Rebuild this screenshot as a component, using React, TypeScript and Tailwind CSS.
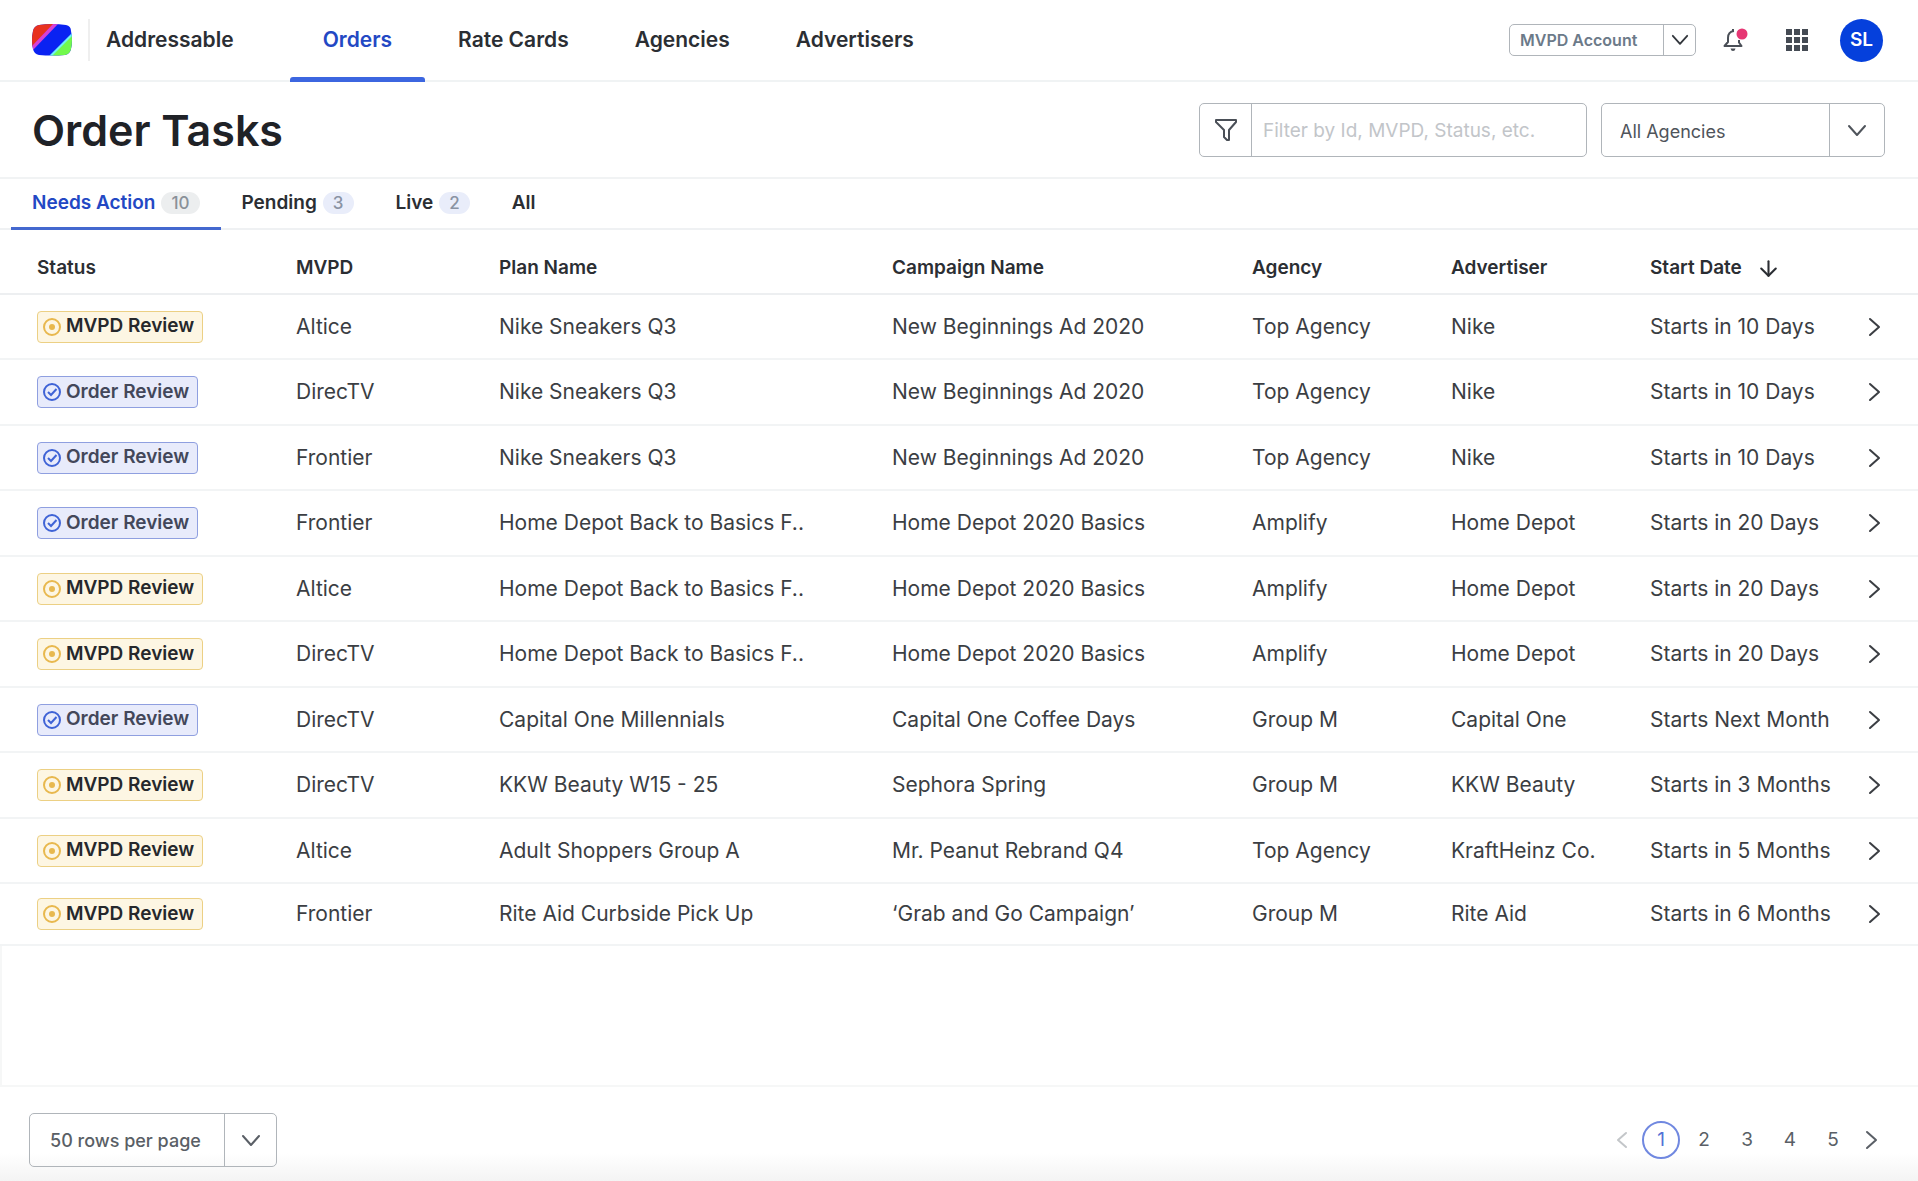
import React from "react";
import { ArrowDown } from "lucide-react";

type Status = "mvpd" | "order";

interface OrderTask {
  status: Status;
  mvpd: string;
  plan: string;
  campaign: string;
  agency: string;
  advertiser: string;
  start: string;
}

const navLinks = ["Orders", "Rate Cards", "Agencies", "Advertisers"];

const tabs = [
  { label: "Needs Action", count: 10 },
  { label: "Pending", count: 3 },
  { label: "Live", count: 2 },
  { label: "All" },
];

const tasks: OrderTask[] = [
  { status: "mvpd", mvpd: "Altice", plan: "Nike Sneakers Q3", campaign: "New Beginnings Ad 2020", agency: "Top Agency", advertiser: "Nike", start: "Starts in 10 Days" },
  { status: "order", mvpd: "DirecTV", plan: "Nike Sneakers Q3", campaign: "New Beginnings Ad 2020", agency: "Top Agency", advertiser: "Nike", start: "Starts in 10 Days" },
  { status: "order", mvpd: "Frontier", plan: "Nike Sneakers Q3", campaign: "New Beginnings Ad 2020", agency: "Top Agency", advertiser: "Nike", start: "Starts in 10 Days" },
  { status: "order", mvpd: "Frontier", plan: "Home Depot Back to Basics F..", campaign: "Home Depot 2020 Basics", agency: "Amplify", advertiser: "Home Depot", start: "Starts in 20 Days" },
  { status: "mvpd", mvpd: "Altice", plan: "Home Depot Back to Basics F..", campaign: "Home Depot 2020 Basics", agency: "Amplify", advertiser: "Home Depot", start: "Starts in 20 Days" },
  { status: "mvpd", mvpd: "DirecTV", plan: "Home Depot Back to Basics F..", campaign: "Home Depot 2020 Basics", agency: "Amplify", advertiser: "Home Depot", start: "Starts in 20 Days" },
  { status: "order", mvpd: "DirecTV", plan: "Capital One Millennials", campaign: "Capital One Coffee Days", agency: "Group M", advertiser: "Capital One", start: "Starts Next Month" },
  { status: "mvpd", mvpd: "DirecTV", plan: "KKW Beauty W15 - 25", campaign: "Sephora Spring", agency: "Group M", advertiser: "KKW Beauty", start: "Starts in 3 Months" },
  { status: "mvpd", mvpd: "Altice", plan: "Adult Shoppers Group A", campaign: "Mr. Peanut Rebrand Q4", agency: "Top Agency", advertiser: "KraftHeinz Co.", start: "Starts in 5 Months" },
  { status: "mvpd", mvpd: "Frontier", plan: "Rite Aid Curbside Pick Up", campaign: "‘Grab and Go Campaign’", agency: "Group M", advertiser: "Rite Aid", start: "Starts in 6 Months" },
];

const Logo = () => (
  <svg width="40" height="32" viewBox="0 0 40 32" aria-hidden="true">
    <defs>
      <clipPath id="logo-clip">
        <path d="M7 1Q20-1 34 1Q39 2 39 7Q41 16 39 25Q38 30 33 31Q20 32 7 31Q2 30 1 25Q-1 16 1 7Q2 2 7 1Z" />
      </clipPath>
    </defs>
    <g clipPath="url(#logo-clip)">
      <rect width="40" height="32" fill="#0a22f2" />
      <path d="M0 0H22L0 23Z" fill="#e8321f" />
      <path d="M21 0H26L0 27V22Z" fill="#d640d8" />
      <path d="M40 9V13L21 32H17Z" fill="#6ff0f5" />
      <path d="M40 12V32H20Z" fill="#72f94c" />
    </g>
  </svg>
);

const ChevronDown = ({ className }: { className: string }) => (
  <svg className={className} viewBox="0 0 20 13" fill="none" stroke="currentColor" strokeWidth="2" strokeLinecap="round" strokeLinejoin="round" aria-hidden="true">
    <path d="M2 2L10 11L18 2" />
  </svg>
);

const ChevronRight = () => (
  <svg width="13" height="20" viewBox="0 0 13 20" fill="none" stroke="currentColor" strokeWidth="2" strokeLinecap="round" strokeLinejoin="round" aria-hidden="true">
    <path d="M2 2L11 10L2 18" />
  </svg>
);

const ChevronLeft = () => (
  <svg width="12" height="20" viewBox="0 0 12 20" fill="none" stroke="currentColor" strokeWidth="2" strokeLinecap="round" strokeLinejoin="round" aria-hidden="true">
    <path d="M10 3L2 10L10 17" />
  </svg>
);

const FilterIcon = () => (
  <svg width="24" height="24" viewBox="0 0 24 24" fill="none" stroke="#4a4f57" strokeWidth="2" strokeLinejoin="round" aria-hidden="true">
    <path d="M2 2H22V4L15 12V22H13L10 19V12L2 4Z" />
  </svg>
);

const BellIcon = () => (
  <svg width="26" height="26" viewBox="0 0 26 26" fill="none" aria-hidden="true">
    <path d="M12 4C7.500 4.500 6 7.500 6 11V15L2.500 19H19.500L17 15.500V13" stroke="#4a4f57" strokeWidth="2" strokeLinejoin="round" />
    <path d="M11 2V5" stroke="#4a4f57" strokeWidth="2" />
    <path d="M8.500 21.500H13.500Q13 24 11 24Q9 24 8.500 21.500Z" fill="#4a4f57" />
    <circle cx="20" cy="7" r="5.500" fill="#e63673" />
  </svg>
);

const GridIcon = () => (
  <svg width="22" height="22" viewBox="0 0 22 22" fill="#454b54" aria-hidden="true">
    {[0, 8, 16].map((y) =>
      [0, 8, 16].map((x) => <rect key={`${x}-${y}`} x={x} y={y} width="6" height="6" />)
    )}
  </svg>
);

const StatusBadge = ({ status }: { status: Status }) => {
  if (status === "mvpd") {
    return (
      <span className="inline-flex h-8 items-center gap-1 rounded-[4px] border border-[#ecd084] bg-[#fdf6e3] pr-2 pl-1 text-[19px] font-semibold text-[#26282c]">
        <svg width="20" height="20" viewBox="0 0 20 20" aria-hidden="true">
          <circle cx="10" cy="10" r="8" fill="none" stroke="#e8b84e" strokeWidth="2" />
          <circle cx="10" cy="10" r="3" fill="#e8b84e" />
        </svg>
        MVPD Review
      </span>
    );
  }

  return (
    <span className="inline-flex h-8 items-center gap-1 rounded-[4px] border border-[#8f9fe0] bg-[#e8ebfb] pr-2 pl-1 text-[19px] font-semibold text-[#43475a]">
      <svg width="20" height="20" viewBox="0 0 20 20" fill="none" stroke="#3f63d6" strokeWidth="2" aria-hidden="true">
        <circle cx="10" cy="10" r="8" />
        <path d="M6 10L9 13L14.500 7" />
      </svg>
      Order Review
    </span>
  );
};

const App = () => {
  const [activeTab, setActiveTab] = React.useState("Needs Action");
  const [filter, setFilter] = React.useState("");

  return (
    <div className="flex min-h-screen flex-col bg-white font-['Inter',sans-serif] text-[#2b2e33]">
      <header className="flex h-[82px] items-center border-b-2 border-[#f0f3f4] pr-[35px] pl-8">
        <Logo />
        <div className="ml-4 h-[42px] border-l-2 border-[#efefef]" />
        <span className="ml-4 text-[21px] font-semibold">Addressable</span>
        <nav className="ml-14 flex h-full">
          {navLinks.map((link) => (
            <a
              key={link}
              href="#"
              className={
                link === "Orders"
                  ? "relative flex items-center px-[33px] text-[21px] font-semibold text-[#2348c4]"
                  : "flex items-center px-[33px] text-[21px] font-semibold"
              }
            >
              {link}
              {link === "Orders" && (
                <span className="absolute inset-x-0 -bottom-[2px] h-[5px] rounded-t-[3px] bg-[#3c66e0]" />
              )}
            </a>
          ))}
        </nav>
        <div className="ml-auto flex items-center">
          <label className="grid h-8 w-[187px] grid-cols-[1fr_32px] rounded-[5px] border border-[#b0b5ba]">
            <select
              aria-label="Account"
              className="col-span-2 col-start-1 row-start-1 appearance-none rounded-[5px] pl-[10px] text-[16px] font-semibold text-[#6c7a89]"
            >
              <option>MVPD Account</option>
            </select>
            <span className="pointer-events-none col-start-2 row-start-1 flex items-center justify-center border-l border-[#b0b5ba] text-[#33373d]">
              <ChevronDown className="w-[18px]" />
            </span>
          </label>
          <button aria-label="Notifications" className="ml-[26px]">
            <BellIcon />
          </button>
          <button aria-label="Apps" className="ml-[38px]">
            <GridIcon />
          </button>
          <button className="ml-8 size-[43px] rounded-full bg-[#0540dc] text-[19px] font-semibold text-white">
            SL
          </button>
        </div>
      </header>

      <div className="flex h-[97px] items-center border-b-2 border-[#f1f3f4] pt-px pr-[33px] pl-8">
        <h1 className="text-[43px] font-semibold text-[#1f2227]">Order Tasks</h1>
        <div className="ml-auto flex h-[54px] w-[388px] rounded-[5px] border border-[#b0b5ba]">
          <label htmlFor="filter" aria-label="Filter orders" className="flex w-[52px] items-center justify-center border-r border-[#b0b5ba]">
            <FilterIcon />
          </label>
          <input
            id="filter"
            type="text"
            value={filter}
            onChange={(e) => setFilter(e.target.value)}
            placeholder="Filter by Id, MVPD, Status, etc."
            className="min-w-0 flex-1 pt-[3px] pl-[11px] text-[19px] placeholder:text-[#c2c5c9]"
          />
        </div>
        <label className="ml-[14px] grid h-[54px] w-[284px] grid-cols-[1fr_55px] rounded-[5px] border border-[#b0b5ba]">
          <select
            aria-label="Agency"
            className="col-span-2 col-start-1 row-start-1 appearance-none rounded-[5px] pt-[3px] pl-[18px] text-[18px] text-[#4f545b]"
          >
            <option>All Agencies</option>
          </select>
          <span className="pointer-events-none col-start-2 row-start-1 flex items-center justify-center border-l border-[#b0b5ba] text-[#4f545b]">
            <ChevronDown className="w-5" />
          </span>
        </label>
      </div>

      <div className="flex h-[51px] border-b-2 border-[#eff1f3] pl-[11px]">
        {tabs.map((tab) => (
          <button
            key={tab.label}
            onClick={() => setActiveTab(tab.label)}
            className={
              activeTab === tab.label
                ? "-mb-[2px] flex items-center gap-[6px] border-b-[3px] border-[#4468cf] px-[21px] text-[19px] font-semibold text-[#2348c4]"
                : "flex items-center gap-[6px] px-[21px] pb-px text-[19px] font-semibold"
            }
          >
            {tab.label}
            {tab.count && (
              <span
                className={
                  activeTab === tab.label
                    ? "rounded-full bg-[#eceeef] px-[10px] text-[17px] leading-[22px] font-medium text-[#8a9199]"
                    : "rounded-full bg-[#e9edfa] px-[10px] text-[17px] leading-[22px] font-medium text-[#8a93a3]"
                }
              >
                {tab.count}
              </span>
            )}
          </button>
        ))}
      </div>

      <table className="w-full table-fixed text-left">
        <thead>
          <tr className="h-[64px] border-b-2 border-[#edeff1] text-[19px]">
            <th className="w-[296px] pt-[13px] pl-[37px] font-semibold">Status</th>
            <th className="w-[203px] pt-[13px] font-semibold">MVPD</th>
            <th className="w-[393px] pt-[13px] font-semibold">Plan Name</th>
            <th className="pt-[13px] font-semibold">Campaign Name</th>
            <th className="w-[199px] pt-[13px] font-semibold">Agency</th>
            <th className="w-[199px] pt-[13px] font-semibold">Advertiser</th>
            <th className="w-[200px] pt-[13px] font-semibold">
              <button className="flex items-center gap-[14px]">
                Start Date
                <ArrowDown size={25} strokeWidth={2} />
              </button>
            </th>
            <th className="w-[68px]" />
          </tr>
        </thead>
        <tbody>
          {tasks.map((task, i) => (
            <tr
              key={i}
              className="h-[65px] border-b-2 border-[#f2f4f5] text-[21px] text-[#3b3e43] even:not-last:h-[66px] last:h-[62px]"
            >
              <td className="pl-[37px]">
                <div className="flex">
                  <StatusBadge status={task.status} />
                </div>
              </td>
              <td>{task.mvpd}</td>
              <td>{task.plan}</td>
              <td>{task.campaign}</td>
              <td>{task.agency}</td>
              <td>{task.advertiser}</td>
              <td className="whitespace-nowrap">{task.start}</td>
              <td>
                <button aria-label="Open order" className="ml-[18px] flex">
                  <ChevronRight />
                </button>
              </td>
            </tr>
          ))}
        </tbody>
      </table>

      <div className="flex-1 border-b-2 border-l-2 border-[#f6f7f7]" />

      <footer className="flex h-[94px] items-center bg-linear-to-b from-white from-70% to-[#f4f4f4] pt-3 pr-10 pl-[29px]">
        <label className="grid h-[54px] w-[248px] grid-cols-[1fr_52px] rounded-[5px] border border-[#b0b5ba]">
          <select
            aria-label="Rows per page"
            className="col-span-2 col-start-1 row-start-1 appearance-none rounded-[5px] pl-5 text-[18px] font-medium text-[#5a5f66]"
          >
            <option>50 rows per page</option>
          </select>
          <span className="pointer-events-none col-start-2 row-start-1 flex items-center justify-center border-l border-[#b0b5ba] text-[#5a5f66]">
            <ChevronDown className="w-5" />
          </span>
        </label>
        <nav aria-label="Pagination" className="ml-auto flex items-center text-[19px] text-[#5a5f66]">
          <button aria-label="Previous page" disabled className="mr-[14px] text-[#c3c6c9]">
            <ChevronLeft />
          </button>
          {[1, 2, 3, 4, 5].map((page) => (
            <button
              key={page}
              className={
                page === 1
                  ? "mr-[5px] size-[38px] rounded-full border-2 border-[#7088e0] text-[#5472d6]"
                  : "mr-[5px] size-[38px]"
              }
            >
              {page}
            </button>
          ))}
          <button aria-label="Next page" className="ml-2">
            <ChevronRight />
          </button>
        </nav>
      </footer>
    </div>
  );
};

export default App;
